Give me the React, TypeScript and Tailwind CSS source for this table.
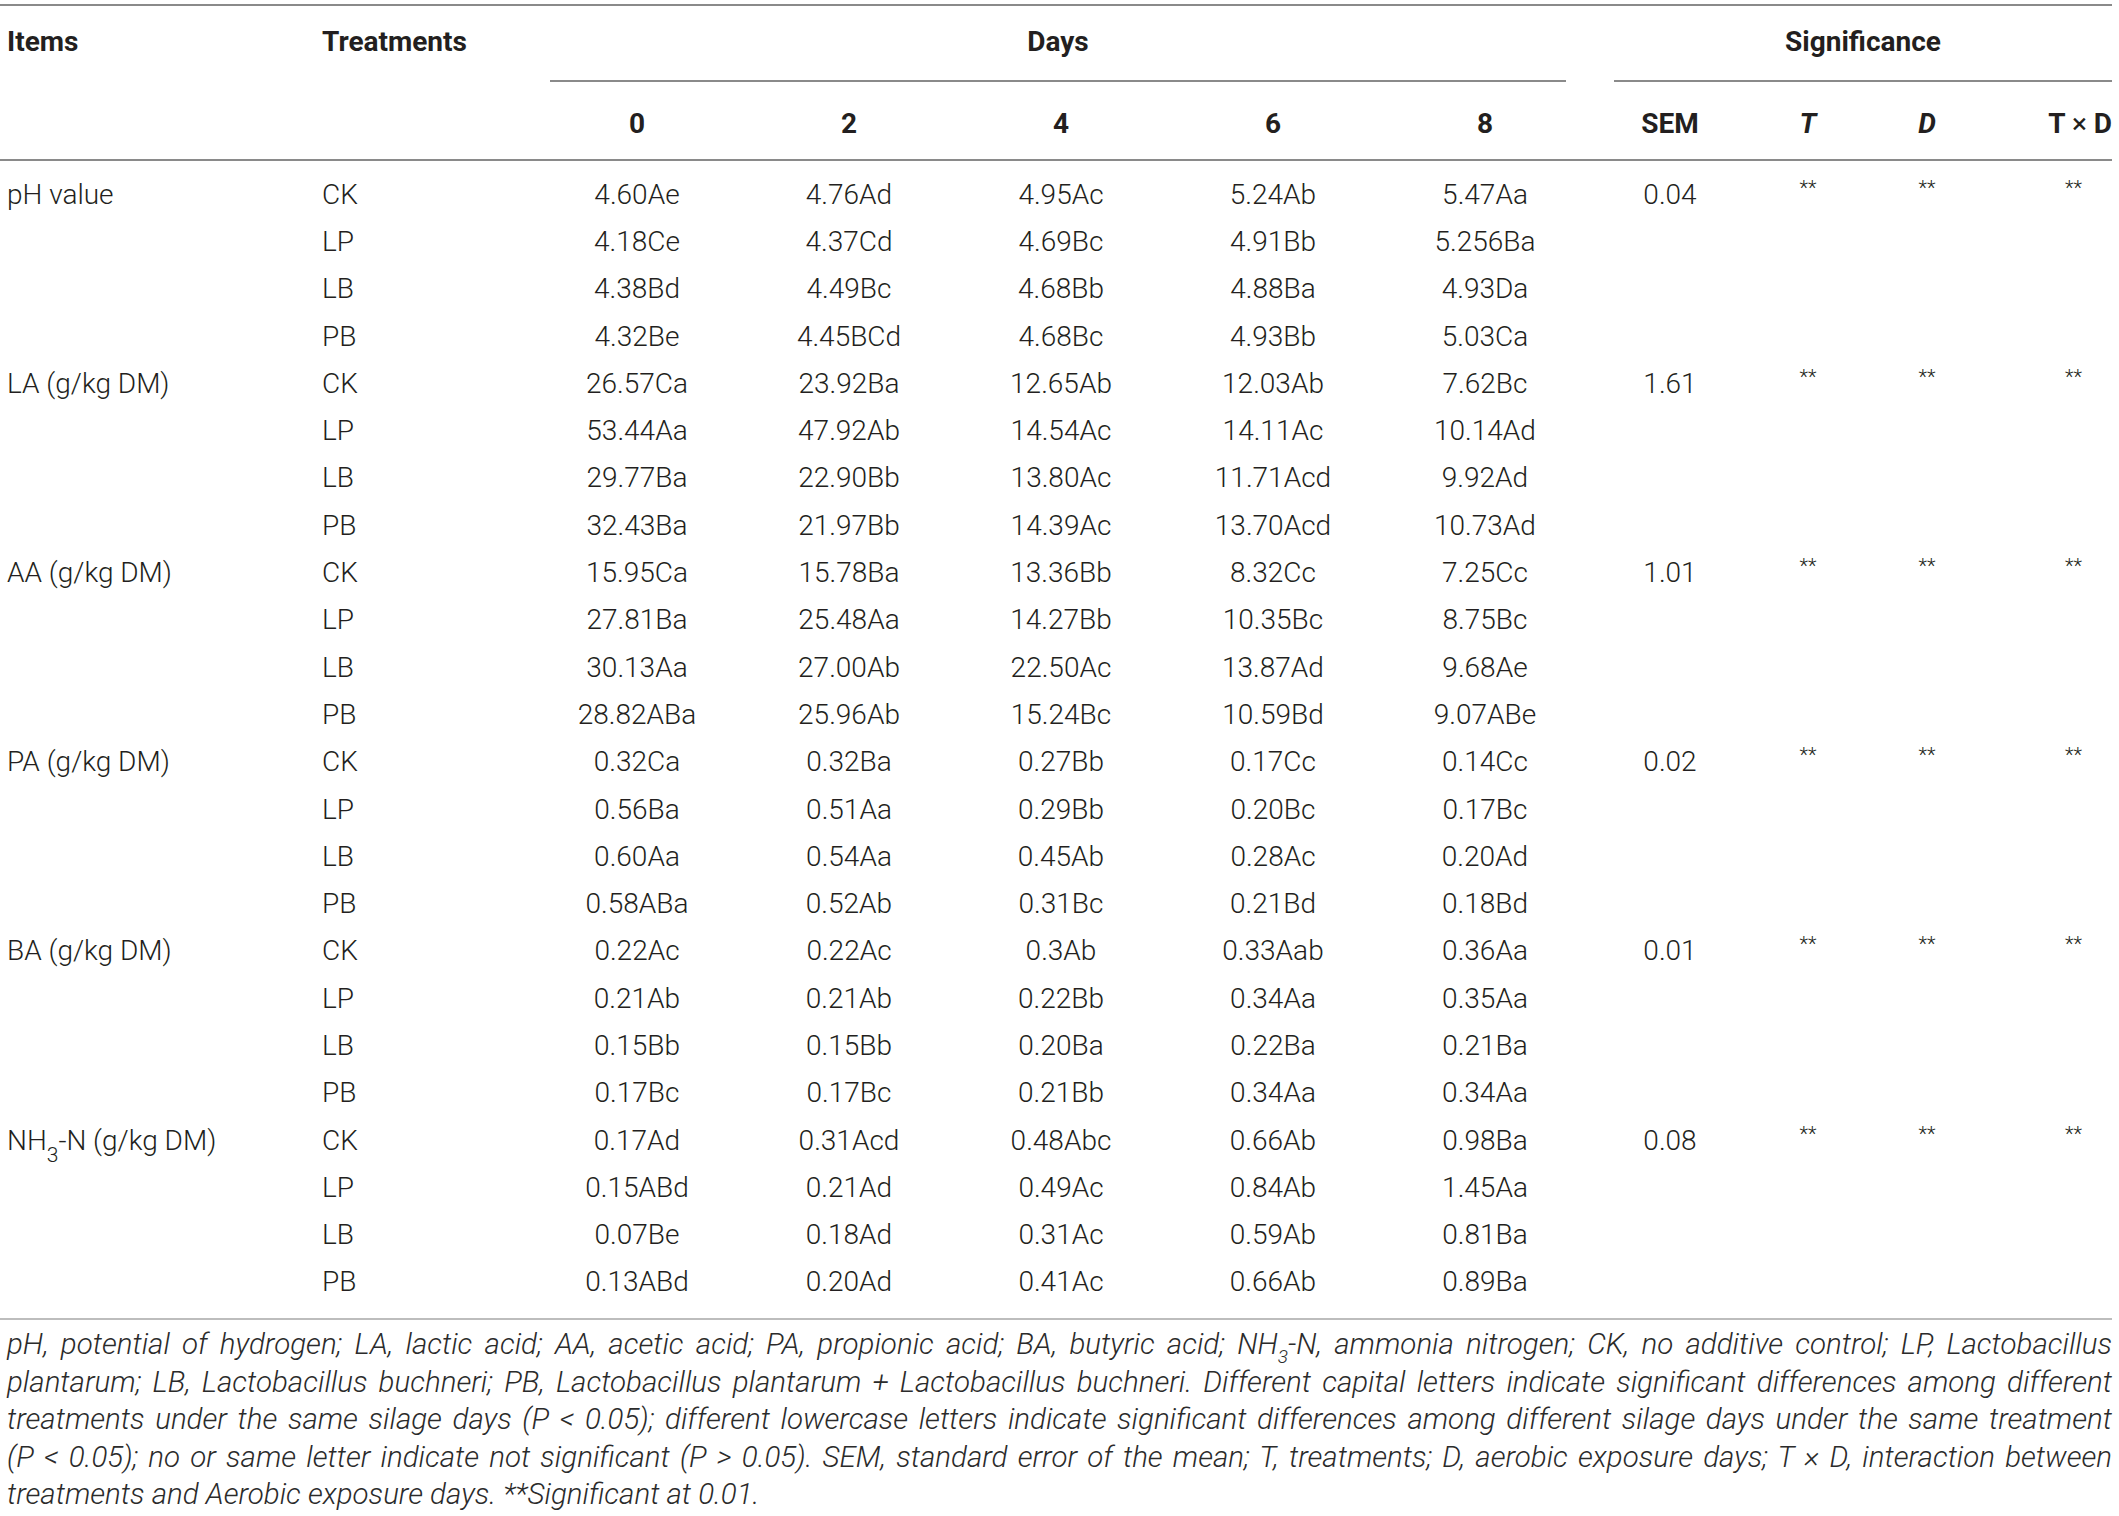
import React from "react";

type Group = { item: React.ReactNode; sem: string; rows: string[][] };

const groups: Group[] = [
  {
    item: "pH value",
    sem: "0.04",
    rows: [
      ["CK", "4.60Ae", "4.76Ad", "4.95Ac", "5.24Ab", "5.47Aa"],
      ["LP", "4.18Ce", "4.37Cd", "4.69Bc", "4.91Bb", "5.256Ba"],
      ["LB", "4.38Bd", "4.49Bc", "4.68Bb", "4.88Ba", "4.93Da"],
      ["PB", "4.32Be", "4.45BCd", "4.68Bc", "4.93Bb", "5.03Ca"],
    ],
  },
  {
    item: "LA (g/kg DM)",
    sem: "1.61",
    rows: [
      ["CK", "26.57Ca", "23.92Ba", "12.65Ab", "12.03Ab", "7.62Bc"],
      ["LP", "53.44Aa", "47.92Ab", "14.54Ac", "14.11Ac", "10.14Ad"],
      ["LB", "29.77Ba", "22.90Bb", "13.80Ac", "11.71Acd", "9.92Ad"],
      ["PB", "32.43Ba", "21.97Bb", "14.39Ac", "13.70Acd", "10.73Ad"],
    ],
  },
  {
    item: "AA (g/kg DM)",
    sem: "1.01",
    rows: [
      ["CK", "15.95Ca", "15.78Ba", "13.36Bb", "8.32Cc", "7.25Cc"],
      ["LP", "27.81Ba", "25.48Aa", "14.27Bb", "10.35Bc", "8.75Bc"],
      ["LB", "30.13Aa", "27.00Ab", "22.50Ac", "13.87Ad", "9.68Ae"],
      ["PB", "28.82ABa", "25.96Ab", "15.24Bc", "10.59Bd", "9.07ABe"],
    ],
  },
  {
    item: "PA (g/kg DM)",
    sem: "0.02",
    rows: [
      ["CK", "0.32Ca", "0.32Ba", "0.27Bb", "0.17Cc", "0.14Cc"],
      ["LP", "0.56Ba", "0.51Aa", "0.29Bb", "0.20Bc", "0.17Bc"],
      ["LB", "0.60Aa", "0.54Aa", "0.45Ab", "0.28Ac", "0.20Ad"],
      ["PB", "0.58ABa", "0.52Ab", "0.31Bc", "0.21Bd", "0.18Bd"],
    ],
  },
  {
    item: "BA (g/kg DM)",
    sem: "0.01",
    rows: [
      ["CK", "0.22Ac", "0.22Ac", "0.3Ab", "0.33Aab", "0.36Aa"],
      ["LP", "0.21Ab", "0.21Ab", "0.22Bb", "0.34Aa", "0.35Aa"],
      ["LB", "0.15Bb", "0.15Bb", "0.20Ba", "0.22Ba", "0.21Ba"],
      ["PB", "0.17Bc", "0.17Bc", "0.21Bb", "0.34Aa", "0.34Aa"],
    ],
  },
  {
    item: (
      <>
        NH<sub className="text-[21px] leading-[0] align-[-7px]">3</sub>-N (g/kg DM)
      </>
    ),
    sem: "0.08",
    rows: [
      ["CK", "0.17Ad", "0.31Acd", "0.48Abc", "0.66Ab", "0.98Ba"],
      ["LP", "0.15ABd", "0.21Ad", "0.49Ac", "0.84Ab", "1.45Aa"],
      ["LB", "0.07Be", "0.18Ad", "0.31Ac", "0.59Ab", "0.81Ba"],
      ["PB", "0.13ABd", "0.20Ad", "0.41Ac", "0.66Ab", "0.89Ba"],
    ],
  },
];

const COLS =
  "grid grid-cols-[322px_209px_212px_212px_212px_212px_212px_158px_118px_120px_125px]";

function Stars() {
  return <span className="text-[20px] leading-none relative -top-[9px]">**</span>;
}

export default function App() {
  return (
    <div className="bg-white w-[2119px] min-h-[1516px] text-[#231f20] [font-family:Roboto,'Liberation_Sans',Arial,sans-serif]">
      <div className="w-[2112px]">
        <div className="h-[4px]" />
        <div className="h-[2px] bg-[#8a8a8a]" />

        {/* Header */}
        <div className={`${COLS} grid-rows-[76px_77px] text-[28px] leading-[34px] font-bold`}>
          <div className="row-span-2 pl-[7px] pt-[19px]">Items</div>
          <div className="row-span-2 pt-[19px]">Treatments</div>
          <div className="col-span-5 flex flex-col">
            <div className="pt-[19px] text-center pl-[19px] pr-[25px]">Days</div>
            <div className="mt-auto ml-[19px] mr-[25px] h-[2px] bg-[#8a8a8a]" />
          </div>
          <div className="col-span-4 flex flex-col">
            <div className="pt-[19px] text-center pl-[23px]">Significance</div>
            <div className="mt-auto ml-[23px] h-[2px] bg-[#8a8a8a]" />
          </div>
          {["0", "2", "4", "6", "8"].map((d) => (
            <div key={d} className="pt-[25px] text-center">
              {d}
            </div>
          ))}
          <div className="pt-[25px] text-center">SEM</div>
          <div className="pt-[25px] text-center italic">T</div>
          <div className="pt-[25px] text-center italic">D</div>
          <div className="pt-[25px] text-right">
            T <span className="font-normal">×</span> D
          </div>
        </div>
        <div className="h-[2px] bg-[#8a8a8a]" />

        {/* Body */}
        <div className="pt-[10px] pb-[12px] text-[28px] font-light">
          {groups.map((g, gi) =>
            g.rows.map((r, ri) => (
              <div key={`${gi}-${ri}`} className={`${COLS} h-[47.3px] items-center leading-[34px]`}>
                <div className="pl-[7px] whitespace-nowrap">{ri === 0 ? g.item : ""}</div>
                <div>{r[0]}</div>
                {r.slice(1).map((v, i) => (
                  <div key={i} className="text-center">
                    {v}
                  </div>
                ))}
                <div className="text-center">{ri === 0 ? g.sem : ""}</div>
                <div className="text-center">{ri === 0 ? <Stars /> : ""}</div>
                <div className="text-center">{ri === 0 ? <Stars /> : ""}</div>
                <div className="text-right pr-[30px]">{ri === 0 ? <Stars /> : ""}</div>
              </div>
            ))
          )}
        </div>
        <div className="h-[2px] bg-[#bdbdbd]" />

        {/* Footnote */}
        <div className="pt-[6px] pl-[7px] text-[29.5px] leading-[37.5px] italic font-light text-[#2b2b2b]">
          <div className="text-justify [text-align-last:justify]">
            pH, potential of hydrogen; LA, lactic acid; AA, acetic acid; PA, propionic acid; BA, butyric acid; NH
            <sub className="text-[19px] leading-[0] align-[-4px]">3</sub>-N, ammonia nitrogen; CK, no additive control; LP, Lactobacillus
          </div>
          <div className="text-justify [text-align-last:justify]">
            plantarum; LB, Lactobacillus buchneri; PB, Lactobacillus plantarum + Lactobacillus buchneri. Different capital letters indicate significant differences among different
          </div>
          <div className="text-justify [text-align-last:justify]">
            treatments under the same silage days (P &lt; 0.05); different lowercase letters indicate significant differences among different silage days under the same treatment
          </div>
          <div className="text-justify [text-align-last:justify]">
            (P &lt; 0.05); no or same letter indicate not significant (P &gt; 0.05). SEM, standard error of the mean; T, treatments; D, aerobic exposure days; T × D, interaction between
          </div>
          <div>treatments and Aerobic exposure days. **Significant at 0.01.</div>
        </div>
      </div>
    </div>
  );
}
